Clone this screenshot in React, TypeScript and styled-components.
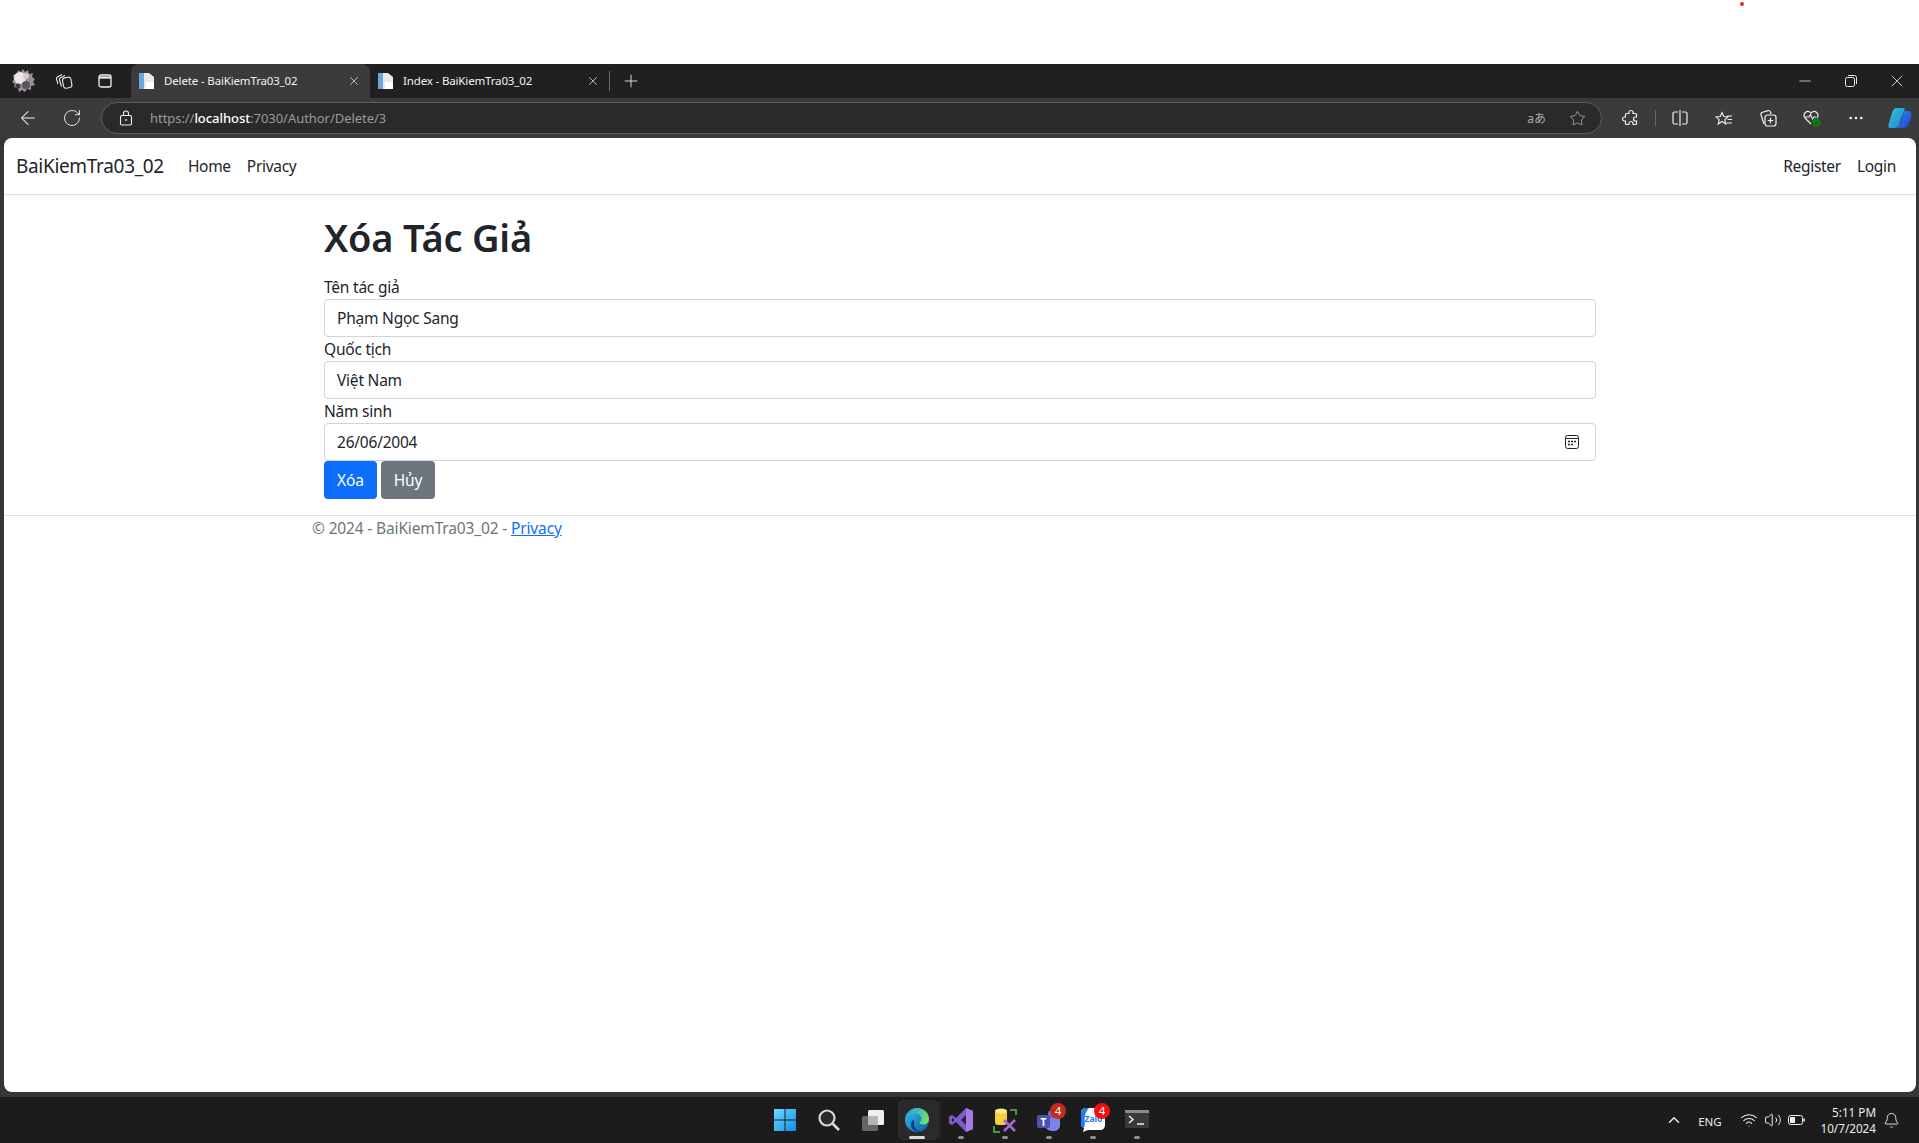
import React from 'react';
import styled, { createGlobalStyle } from 'styled-components';
import {
  ArrowLeft, RotateCw, Plus, X, Minus, Star, MoreHorizontal, ChevronUp, Wifi, Volume2, Bell,
} from 'lucide-react';

const GlobalStyle = createGlobalStyle`
  html, body { margin: 0; padding: 0; background: #fff; }
  body { font-family: 'Noto Sans', 'Open Sans', sans-serif; font-size: 16px; color: #212529; }
  * { box-sizing: border-box; }
`;

const Screen = styled.div`
  width: 1919px;
  height: 1143px;
  display: flex;
  flex-direction: column;
  overflow: hidden;
  position: relative;
`;

const TopGap = styled.div`
  height: 64px;
  background: #fff;
  position: relative;
`;

const RedDot = styled.span`
  position: absolute;
  left: 1740px;
  top: 2px;
  width: 4px;
  height: 4px;
  border-radius: 50%;
  background: #e8262c;
`;

const TabStrip = styled.div`
  height: 34px;
  background: #202020;
  display: flex;
  align-items: flex-end;
  padding-left: 2px;
  color: #e8e8e8;
`;

const StripIcon = styled.div`
  width: 41px;
  height: 34px;
  display: flex;
  align-items: center;
  justify-content: center;
`;

const TabRow = styled.div`
  display: flex;
  margin-left: 6px;
`;

const Tab = styled.div<{ $active?: boolean }>`
  width: 239px;
  height: 34px;
  padding: 0 9px 0 7px;
  display: flex;
  align-items: center;
  gap: 9px;
  font-size: 11.5px;
  letter-spacing: -0.15px;
  color: #f2f2f2;
  border-radius: 8px 8px 0 0;
  background: ${p => (p.$active ? '#3b3b3b' : 'transparent')};
`;

const TabTitle = styled.span`
  flex: 1;
  white-space: nowrap;
  margin-top: -1px;
`;

const TabDivider = styled.div`
  width: 1px;
  height: 20px;
  background: #6a6a6a;
  margin: 0 0 7px 0;
`;

const WindowButtons = styled.div`
  margin-left: auto;
  margin-right: -1px;
  display: flex;
  height: 34px;
  align-items: center;
`;

const WinButton = styled.div`
  width: 46px;
  height: 34px;
  display: flex;
  align-items: center;
  justify-content: center;
`;

const Toolbar = styled.div`
  height: 40px;
  background: #3b3b3b;
  display: flex;
  align-items: center;
  padding-left: 6px;
  color: #f0f0f0;
`;

const ToolButton = styled.div`
  width: 44px;
  height: 32px;
  flex: none;
  display: flex;
  align-items: center;
  justify-content: center;
`;

const AddressBar = styled.div`
  width: 1501px;
  height: 32px;
  flex: none;
  margin-left: 7px;
  border: 1px solid #5c5c5c;
  border-radius: 16px;
  background: #2a2a2a;
  display: flex;
  align-items: center;
  padding: 0 15px 0 17px;
  gap: 17px;
`;

const Url = styled.div`
  flex: 1;
  font-size: 13px;
  letter-spacing: -0.05px;
  color: #9a9a9a;
  b { color: #fff; font-weight: 500; }
`;

const Translate = styled.span`
  font-size: 12px;
  color: #a8a8a8;
  margin-right: 6px;
  font-family: 'Noto Sans', 'Noto Sans CJK JP', sans-serif;
`;

const ToolGroup = styled.div`
  display: flex;
  flex: none;
  align-items: center;
  margin-left: 7px;
`;

const ToolSep = styled.div`
  width: 1px;
  height: 16px;
  flex: none;
  background: #666;
  margin: 0 2px 0 1.5px;
`;

const Viewport = styled.div`
  flex: 1;
  background: #363636;
  padding: 0 3px 0 4px;
  display: flex;
`;

const Page = styled.div`
  flex: 1;
  background: #fff;
  border-radius: 8px;
  display: flex;
  flex-direction: column;
  margin-bottom: 5px;
`;

const Navbar = styled.nav`
  height: 57px;
  border-bottom: 1px solid #dee2e6;
  box-shadow: 0 1px 3px rgba(0, 0, 0, 0.04);
  padding: 0 12px 0 11px;
  display: flex;
  align-items: center;
`;

const Brand = styled.a`
  font-size: 19px;
  letter-spacing: -0.32px;
  color: #212529;
  margin-right: 16px;
  padding-left: 1px;
`;

const NavLink = styled.a`
  font-size: 15.5px;
  letter-spacing: -0.3px;
  color: #212529;
  padding: 0 8px;
`;

const NavSpacer = styled.div`
  flex: 1;
`;

const Main = styled.main`
  width: 1320px;
  margin: 0 auto;
  padding: 0 24px;
`;

const Title = styled.h1`
  font-size: 38px;
  line-height: 48px;
  font-weight: 600;
  margin: 18px 0 14px;
  letter-spacing: -0.2px;
`;

const Label = styled.label`
  display: block;
  height: 24px;
  line-height: 24px;
  font-size: 15.5px;
  letter-spacing: -0.22px;
`;

const Field = styled.div`
  height: 38px;
  border: 1px solid #ced4da;
  border-radius: 4px;
  padding: 0 16px 0 12px;
  display: flex;
  align-items: center;
  justify-content: space-between;
  font-size: 15.5px;
  letter-spacing: -0.22px;
`;

const Actions = styled.div`
  display: flex;
  gap: 4px;
`;

const Btn = styled.button<{ $tone: string }>`
  height: 38px;
  padding: 0 13px;
  border: none;
  border-radius: 4px;
  color: #fff;
  font: inherit;
  font-size: 15.5px;
  letter-spacing: -0.15px;
  background: ${p => p.$tone};
`;

const Footer = styled.footer`
  margin-top: 16px;
  border-top: 1px solid #dee2e6;
  line-height: 24px;
  color: #6c757d;
  font-size: 15.5px;
  letter-spacing: -0.15px;
  height: 24px;
`;

const FooterInner = styled.div`
  width: 1320px;
  margin: 0 auto;
  padding: 0 12px;
  a { color: #0d6efd; text-decoration: underline; }
`;

const Taskbar = styled.div`
  height: 46px;
  background: #1c1c1c;
  position: relative;
  display: flex;
  align-items: center;
  color: #f0f0f0;
`;

const TaskIcons = styled.div`
  position: absolute;
  left: 763px;
  top: 0;
  height: 46px;
  display: flex;
`;

const TaskSlot = styled.div<{ $active?: boolean }>`
  width: 44px;
  height: 46px;
  position: relative;
  display: flex;
  align-items: center;
  justify-content: center;
  ${p => p.$active && `
    &::before {
      content: '';
      position: absolute;
      left: 3px;
      right: 1px;
      top: 3px;
      bottom: 3px;
      background: #2a2a2a;
      border: 1px solid #303030;
      border-radius: 5px;
      box-shadow: 4px 0 0 -1px #262626;
    }
    & > * { position: relative; }
  `}
`;

const RunDot = styled.span<{ $active?: boolean }>`
  && { position: absolute; }
  bottom: 4px;
  left: 50%;
  transform: translateX(-50%);
  width: ${p => (p.$active ? 16 : 6)}px;
  height: 3px;
  border-radius: 2px;
  background: ${p => (p.$active ? '#d8d8d8' : '#8f8f8f')};
`;

const Badge = styled.span<{ $tone: string }>`
  position: absolute;
  top: 6px;
  right: 5px;
  width: 16px;
  height: 16px;
  border-radius: 50%;
  background: ${p => p.$tone};
  color: #fff;
  font-size: 11.5px;
  line-height: 16px;
  text-align: center;
`;

const Tray = styled.div`
  margin-left: auto;
  display: flex;
  align-items: center;
  font-size: 11.7px;
  color: #ececec;
  padding-right: 19px;
`;

const TrayText = styled.span`
  margin: 2px 18px 0 15px;
  letter-spacing: -0.1px;
  font-size: 11.5px;
`;

const TrayIcons = styled.div`
  display: flex;
  gap: 6px;
  align-items: center;
`;

const Clock = styled.div`
  text-align: right;
  line-height: 16px;
  margin: 0 7px 0 16px;
`;

const FileIcon = () => (
  <svg width="17" height="18" viewBox="0 0 17 18">
    <path d="M1 1h10l5 4v12H1z" fill="#e6e9ee" />
    <rect x="1" y="1" width="5" height="16" fill="#6ea6d8" />
    <rect x="8" y="10" width="8" height="7" fill="#fff" />
  </svg>
);

const Avatar = () => (
  <svg width="24" height="26" viewBox="0 0 24 26">
    <path d="M12 1l2 3 3-2 1 4 4-1-1 4 3 2-2 3 2 3-4 1 0 4-4-1-2 3-3-2-3 2-1-4-4-1 1-3-3-2 2-3-1-4 4-1 1-4 3 2z" fill="#9c8f98" />
    <circle cx="9" cy="10" r="6" fill="#ece6ea" />
    <circle cx="15" cy="8" r="3" fill="#d9c6d0" />
    <circle cx="15" cy="17" r="4" fill="#5a5560" />
    <circle cx="7" cy="18" r="2.5" fill="#3d3a44" />
  </svg>
);

const Collections = () => (
  <svg width="18" height="18" viewBox="0 0 18 18" fill="none" stroke="#e8e8e8" strokeWidth="1.1">
    <path d="M3 12L1.500 7c-.3-1 0-1.600 1-2L7 2.500" />
    <path d="M6.500 14.500L4.500 8c-.3-1 0-1.600 1-2.200L10 3.500" />
    <rect x="8" y="5.500" width="8.500" height="10.500" rx="2.500" transform="rotate(-10 12 11)" />
  </svg>
);

const TabsIcon = () => (
  <svg width="16" height="16" viewBox="0 0 16 16" fill="none" stroke="#eee" strokeWidth="1.300">
    <rect x="2" y="2" width="12" height="12" rx="2" />
    <path d="M2 4.500h12" strokeWidth="2.200" />
  </svg>
);

const LockGlyph = () => (
  <svg width="14" height="16" viewBox="0 0 14 16" fill="none" stroke="#f0f0f0" strokeWidth="1.100">
    <rect x="1.500" y="5.500" width="11" height="9.500" rx="1.500" />
    <path d="M4.500 5.500V3.500a2.500 2.500 0 0 1 5 0v2" />
    <circle cx="7" cy="10" r="0.900" fill="#f0f0f0" stroke="none" />
  </svg>
);

const RestoreGlyph = () => (
  <svg width="12" height="12" viewBox="0 0 12 12" fill="none" stroke="#e8e8e8" strokeWidth="1">
    <rect x="0.500" y="2.500" width="9" height="9" rx="1.800" />
    <path d="M3 .500h6.500a2 2 0 0 1 2 2V9" />
  </svg>
);

const PuzzleGlyph = () => (
  <svg width="18" height="18" viewBox="0 0 18 18" fill="none" stroke="#f0f0f0" strokeWidth="1.200">
    <path d="M7 3.500a2 2 0 0 1 4 0V4.500h2.500a1 1 0 0 1 1 1V8h-1a2 2 0 0 0 0 4h1v2.500a1 1 0 0 1-1 1H11v-1a2 2 0 0 0-4 0v1H4.500a1 1 0 0 1-1-1V12h-1a2 2 0 0 1 0-4h1V5.500a1 1 0 0 1 1-1H7z" />
  </svg>
);

const SplitGlyph = () => (
  <svg width="18" height="18" viewBox="0 0 18 18" fill="none" stroke="#f0f0f0" strokeWidth="1.200">
    <path d="M7 3H3.500A1.500 1.500 0 0 0 2 4.500v9A1.500 1.500 0 0 0 3.500 15H7" />
    <path d="M11 3h3.500A1.500 1.500 0 0 1 16 4.500v9a1.500 1.500 0 0 1-1.500 1.500H11" />
    <path d="M9 1v16" />
  </svg>
);

const FavoritesGlyph = () => (
  <svg width="18" height="18" viewBox="0 0 18 18" fill="none" stroke="#f0f0f0" strokeWidth="1.100">
    <path d="M7 1.500l1.800 4 4.200.400-3.200 2.800 1 4.300L7 10.500l-3.800 2.500 1-4.300L1 5.900l4.200-.400z" transform="translate(0 2)" />
    <path d="M12 7h5M12.500 10.500H17M11.500 14H17" />
  </svg>
);

const CopilotIcon = () => (
  <svg width="26" height="24" viewBox="0 0 26 24">
    <defs>
      <linearGradient id="cpA" x1="0" y1="0" x2="1" y2="1">
        <stop offset="0" stopColor="#36c6d8" />
        <stop offset="1" stopColor="#1e7fd8" />
      </linearGradient>
      <linearGradient id="cpB" x1="0" y1="0" x2="1" y2="1">
        <stop offset="0" stopColor="#2a8ff0" />
        <stop offset="1" stopColor="#2340c8" />
      </linearGradient>
    </defs>
    <path d="M10 2h6c2 0 2 1 1 3l-5 14c-1 2-2 3-4 3H4c-3 0-3-2-2-5l3-10c1-3 2-5 5-5z" fill="url(#cpA)" />
    <path d="M17 5h4c3 0 4 3 3 6l-2 7c-1 3-3 4-5 4h-8l3-3c2-2 2-3 3-6z" fill="url(#cpB)" />
  </svg>
);

const HeartCheck = () => (
  <svg width="20" height="20" viewBox="0 0 20 20" fill="none">
    <path d="M9 16L3 10C0 6 5 1 9 5c4-4 9 1 6 5" stroke="#eee" strokeWidth="1.200" />
    <path d="M3 9h4l1.500-2.500L10.500 11 12 9h2" stroke="#eee" strokeWidth="1.100" />
    <circle cx="14.500" cy="14.500" r="4.200" fill="#107c10" />
    <path d="M12.700 14.500l1.300 1.300 2.200-2.400" stroke="#0b3d0b" strokeWidth="1" />
  </svg>
);

const CollectionAdd = () => (
  <svg width="20" height="20" viewBox="0 0 20 20" fill="none" stroke="#eee" strokeWidth="1.200">
    <path d="M6 16L3 7c-.4-1.400.2-2.300 1.500-2.700L10 2.600c1.200-.3 2 .2 2.500 1.300L13 6" />
    <rect x="7" y="7" width="11" height="11" rx="2.500" />
    <path d="M12.500 9.800v5.400M9.800 12.500h5.400" />
  </svg>
);

const WindowsLogo = () => (
  <svg width="24" height="24" viewBox="0 0 24 24">
    <defs>
      <linearGradient id="winG" x1="0" y1="0" x2="1" y2="1">
        <stop offset="0" stopColor="#6fd8ff" />
        <stop offset="1" stopColor="#0f8fe8" />
      </linearGradient>
    </defs>
    <path d="M1 1h10.500v10.500H1zM12.500 1H23v10.500H12.500zM1 12.500h10.500V23H1zM12.500 12.500H23V23H12.500z" fill="url(#winG)" />
  </svg>
);

const SearchGlyph = () => (
  <svg width="24" height="24" viewBox="0 0 24 24" fill="none" stroke="#d8d8d8">
    <circle cx="10" cy="10" r="7.500" strokeWidth="2.200" fill="#2a2a2a" />
    <path d="M15.500 15.500L22 22" strokeWidth="2.600" />
  </svg>
);

const DesktopsGlyph = () => (
  <svg width="26" height="24" viewBox="0 0 26 24">
    <rect x="8" y="2" width="16" height="15" rx="1.500" fill="#efefef" />
    <rect x="2" y="8" width="16" height="15" rx="1.500" fill="#6a6a6a" opacity="0.950" />
    <rect x="8" y="8" width="10" height="9" fill="#b5b5b5" />
  </svg>
);

const EdgeGlyph = () => (
  <svg width="26" height="26" viewBox="0 0 26 26">
    <defs>
      <linearGradient id="edgeA" x1="0" y1="0" x2="1" y2="1">
        <stop offset="0" stopColor="#35c1f1" />
        <stop offset="1" stopColor="#0c59a4" />
      </linearGradient>
      <linearGradient id="edgeB" x1="0" y1="0" x2="1" y2="0.600">
        <stop offset="0" stopColor="#1b9de2" />
        <stop offset="1" stopColor="#6fe06a" />
      </linearGradient>
    </defs>
    <circle cx="13" cy="13" r="12" fill="url(#edgeA)" />
    <path d="M1.500 12C3 5 8 1 13 1c7 0 12 5 12 11 0 3.500-2.500 5.500-6 5.500-2 0-3.500-.8-3.500-1.700 0-1 2-1.300 2-3.800C17.500 9 15 6.500 11.500 6.500 7 6.500 3.500 9 1.500 12z" fill="url(#edgeB)" />
    <path d="M10 13c-3 1-4 5-2 8 2 3 6 4 9 3-4 .2-7-3-7-7 0-1.500 0-3 0-4z" fill="#0a3d7a" />
  </svg>
);

const VsGlyph = () => (
  <svg width="24" height="26" viewBox="0 0 24 26">
    <path d="M17 1l7 3v18l-7 3L7 15l-4 3-3-1.500v-7L3 8l4 3z" fill="#7f5bc4" />
    <path d="M3 10.500v5l2.500-2.500z" fill="#2b2040" />
    <path d="M17 1l7 3v18l-7 3z" fill="#a07ee0" />
    <path d="M17 8v10l-5-5z" fill="#2b2040" />
  </svg>
);

const DbToolGlyph = () => (
  <svg width="24" height="26" viewBox="0 0 24 26" fill="none">
    <rect x="2" y="3" width="12" height="15" rx="3" fill="#f4d13d" />
    <ellipse cx="8" cy="4" rx="6" ry="2.500" fill="#fbe88a" />
    <path d="M17 3h6v5M1 19v6h6" stroke="#3f9b3f" strokeWidth="2" />
    <path d="M11 24l11-11M11 13l11 11" stroke="#a566d8" strokeWidth="2.500" />
  </svg>
);

const TeamsGlyph = () => (
  <svg width="26" height="24" viewBox="0 0 26 24">
    <circle cx="16" cy="6" r="4" fill="#6a72c8" />
    <path d="M8 10h16v7c0 4-3 6-7 6s-7-2-8-5z" fill="#7b83eb" />
    <rect x="1" y="7" width="13" height="13" rx="2" fill="#4a52b5" />
    <text x="7.500" y="17.500" fontSize="10" fill="#fff" textAnchor="middle" fontWeight="700">T</text>
  </svg>
);

const ZaloGlyph = () => (
  <svg width="26" height="26" viewBox="0 0 26 26">
    <path d="M6 1h14c3 0 5 2 5 5v12c0 3-2 5-5 5H8l-5 2 1-4c-2-1-3-2-3-4V6c0-3 2-5 5-5z" fill="#fff" />
    <path d="M1 6c0-3 2-5 5-5h3C5 5 4 11 5 17l-1 4c-2-1-3-2-3-4z" fill="#1f7cf0" />
    <text x="13.500" y="15" fontSize="8.500" fill="#1f7cf0" textAnchor="middle" fontWeight="700">Zalo</text>
  </svg>
);

const TerminalGlyph = () => (
  <svg width="24" height="20" viewBox="0 0 24 20">
    <rect x="0" y="0" width="24" height="18" rx="1.500" fill="#3a3a3a" />
    <rect x="0" y="0" width="24" height="3" fill="#8a8a8a" />
    <path d="M4 6l4 3.500L4 13" stroke="#eee" strokeWidth="1.500" fill="none" />
    <path d="M12 14h7" stroke="#eee" strokeWidth="1.500" />
  </svg>
);

const BatteryGlyph = () => (
  <svg width="17" height="12" viewBox="0 0 17 12" fill="none" stroke="#eee">
    <rect x="0.500" y="1.500" width="14" height="9" rx="2" />
    <rect x="2" y="3" width="5" height="6" fill="#eee" stroke="none" />
    <path d="M16 4.500v3" strokeWidth="1.500" />
  </svg>
);

const CalendarGlyph = () => (
  <svg width="14" height="14" viewBox="0 0 14 14" fill="none" stroke="#222">
    <rect x="0.500" y="0.500" width="13" height="13" rx="2" />
    <path d="M0.500 3.500h13" />
    <path d="M3 6.500h2M6 6.500h2M9 6.500h2M3 9.500h2M6 9.500h2" strokeWidth="1.500" />
  </svg>
);

export default function App() {
  return (
    <Screen>
      <GlobalStyle />
      <TopGap><RedDot /></TopGap>
      <TabStrip>
        <StripIcon><Avatar /></StripIcon>
        <StripIcon><Collections /></StripIcon>
        <StripIcon><TabsIcon /></StripIcon>
        <TabRow>
          <Tab $active>
            <FileIcon />
            <TabTitle>Delete - BaiKiemTra03_02</TabTitle>
            <X size={14} strokeWidth={1.2} />
          </Tab>
          <Tab>
            <FileIcon />
            <TabTitle>Index - BaiKiemTra03_02</TabTitle>
            <X size={14} strokeWidth={1.2} />
          </Tab>
        </TabRow>
        <TabDivider />
        <StripIcon><Plus size={20} strokeWidth={1.1} /></StripIcon>
        <WindowButtons>
          <WinButton><Minus size={18} strokeWidth={1} /></WinButton>
          <WinButton><RestoreGlyph /></WinButton>
          <WinButton><X size={20} strokeWidth={1} /></WinButton>
        </WindowButtons>
      </TabStrip>
      <Toolbar>
        <ToolButton><ArrowLeft size={22} strokeWidth={1.1} /></ToolButton>
        <ToolButton><RotateCw size={20} strokeWidth={1.1} /></ToolButton>
        <AddressBar>
          <LockGlyph />
          <Url>https://<b>localhost</b>:7030/Author/Delete/3</Url>
          <Translate>aあ</Translate>
          <Star size={17} strokeWidth={1.1} color="#b8b8b8" />
        </AddressBar>
        <ToolGroup>
          <ToolButton><PuzzleGlyph /></ToolButton>
          <ToolSep />
          <ToolButton><SplitGlyph /></ToolButton>
          <ToolButton><FavoritesGlyph /></ToolButton>
          <ToolButton><CollectionAdd /></ToolButton>
          <ToolButton><HeartCheck /></ToolButton>
          <ToolButton><MoreHorizontal size={18} strokeWidth={1.6} /></ToolButton>
          <ToolButton><CopilotIcon /></ToolButton>
        </ToolGroup>
      </Toolbar>
      <Viewport>
        <Page>
          <Navbar>
            <Brand>BaiKiemTra03_02</Brand>
            <NavLink>Home</NavLink>
            <NavLink>Privacy</NavLink>
            <NavSpacer />
            <NavLink>Register</NavLink>
            <NavLink>Login</NavLink>
          </Navbar>
          <Main>
            <Title>Xóa Tác Giả</Title>
            <Label>Tên tác giả</Label>
            <Field>Phạm Ngọc Sang</Field>
            <Label>Quốc tịch</Label>
            <Field>Việt Nam</Field>
            <Label>Năm sinh</Label>
            <Field>26/06/2004<CalendarGlyph /></Field>
            <Actions>
              <Btn $tone="#0d6efd">Xóa</Btn>
              <Btn $tone="#6c757d">Hủy</Btn>
            </Actions>
          </Main>
          <Footer>
            <FooterInner>© 2024 - BaiKiemTra03_02 - <a>Privacy</a></FooterInner>
          </Footer>
        </Page>
      </Viewport>
      <Taskbar>
        <TaskIcons>
          <TaskSlot><WindowsLogo /></TaskSlot>
          <TaskSlot><SearchGlyph /></TaskSlot>
          <TaskSlot><DesktopsGlyph /></TaskSlot>
          <TaskSlot $active><EdgeGlyph /><RunDot $active /></TaskSlot>
          <TaskSlot><VsGlyph /><RunDot /></TaskSlot>
          <TaskSlot><DbToolGlyph /><RunDot /></TaskSlot>
          <TaskSlot><TeamsGlyph /><Badge $tone="#c42b1c">4</Badge><RunDot /></TaskSlot>
          <TaskSlot><ZaloGlyph /><Badge $tone="#f01010">4</Badge><RunDot /></TaskSlot>
          <TaskSlot><TerminalGlyph /><RunDot /></TaskSlot>
        </TaskIcons>
        <Tray>
          <ChevronUp size={18} strokeWidth={2} />
          <TrayText>ENG</TrayText>
          <TrayIcons>
            <Wifi size={18} strokeWidth={1.4} />
            <Volume2 size={18} strokeWidth={1.3} />
            <BatteryGlyph />
          </TrayIcons>
          <Clock>5:11 PM<br />10/7/2024</Clock>
          <Bell size={17} strokeWidth={1.3} />
        </Tray>
      </Taskbar>
    </Screen>
  );
}
